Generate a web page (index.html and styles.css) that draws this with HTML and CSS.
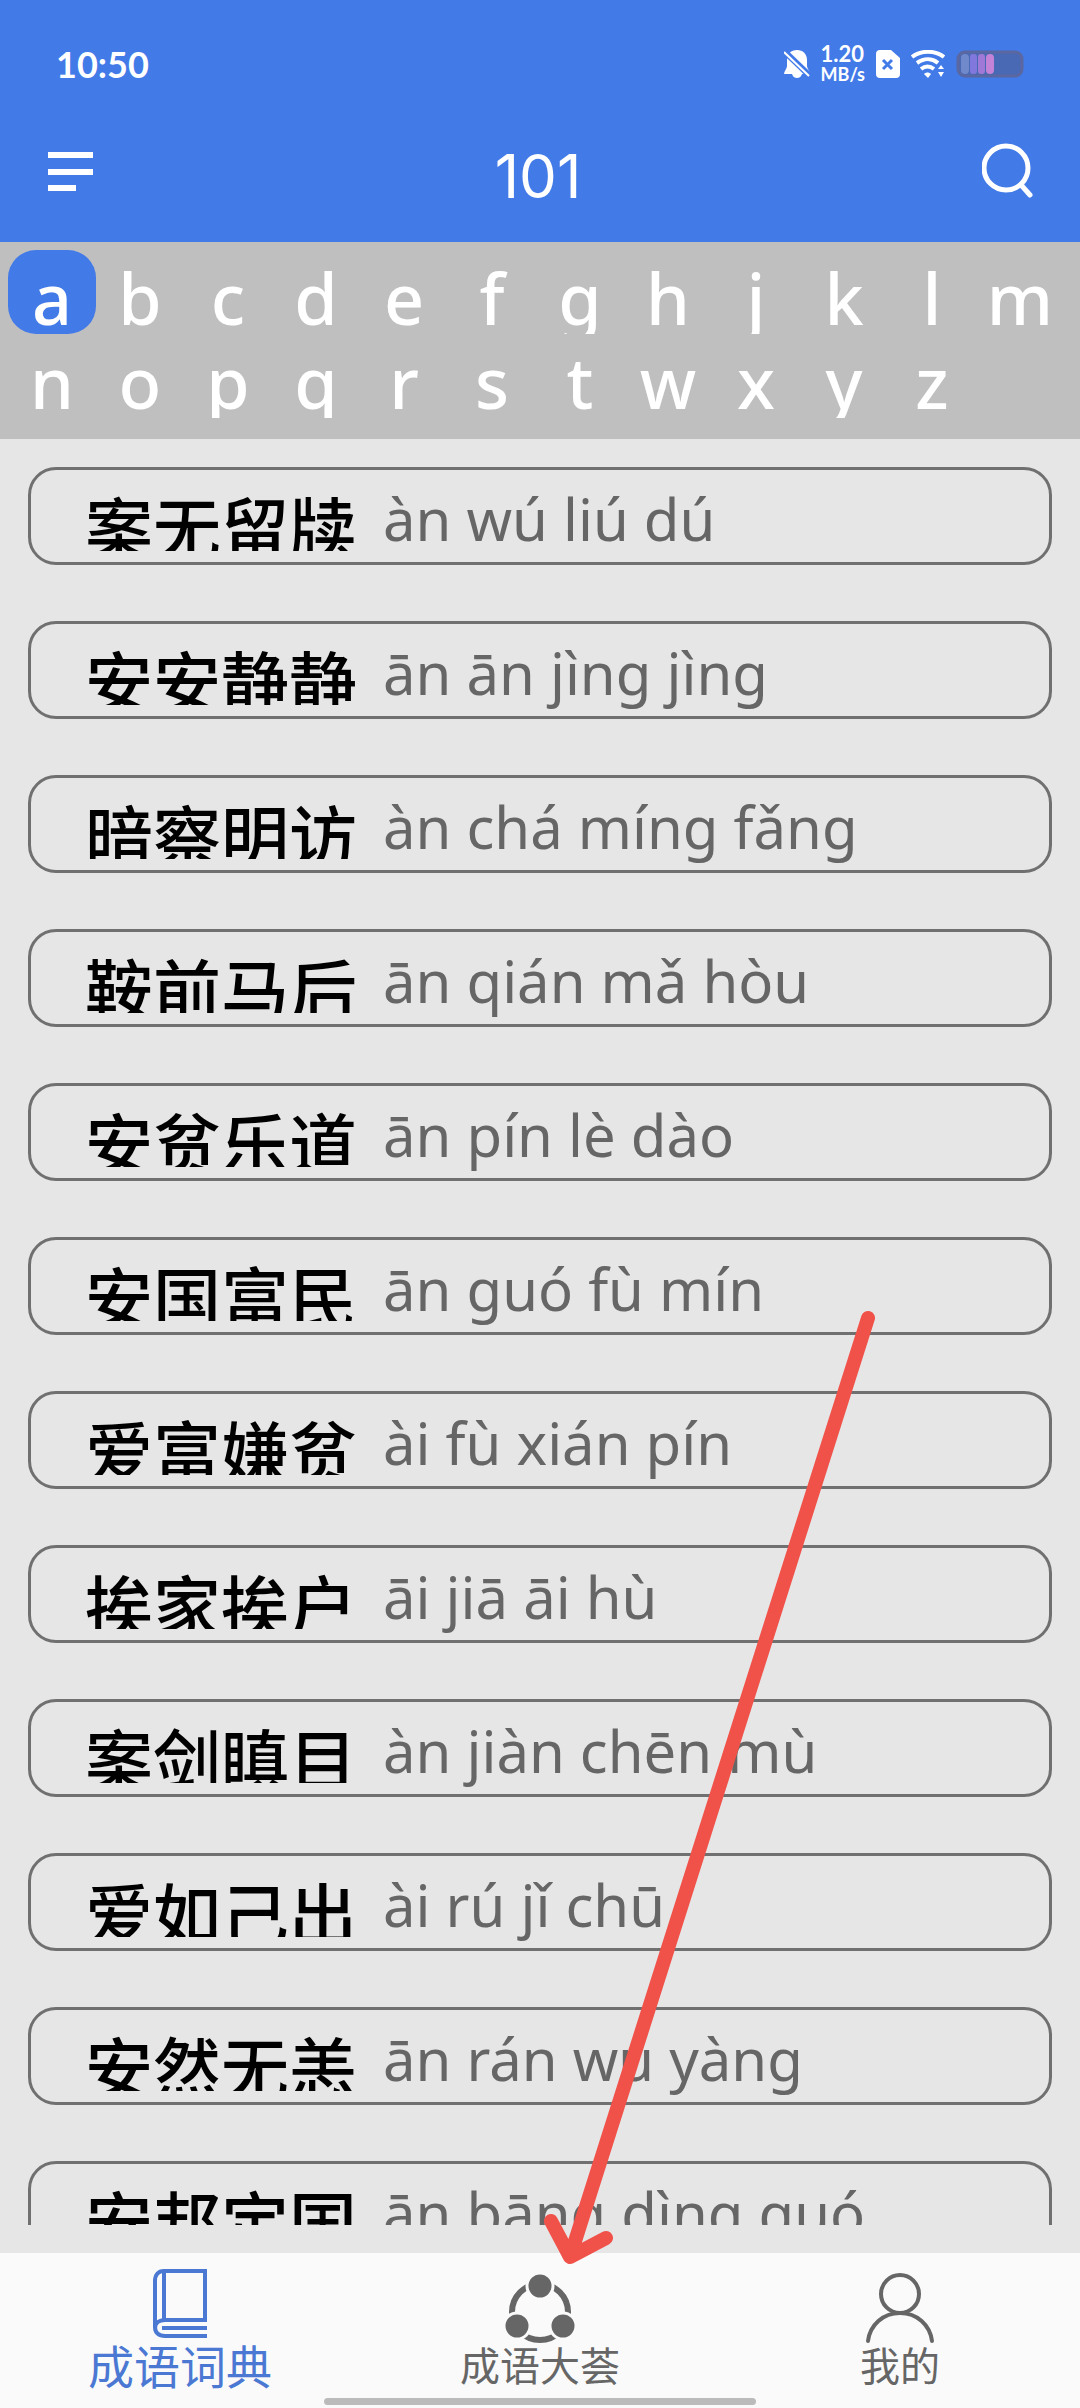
FILE: index.html
```html
<!DOCTYPE html>
<html lang="zh-CN">
<head>
    <meta charset="UTF-8">
    <meta name="viewport" content="width=device-width, initial-scale=1">
    <title>成语词典</title>
    <link rel="stylesheet" href="styles.css">
</head>
<body>
    <header class="header">
        <!-- Status bar -->
        <div class="status">
            <span class="time">10:50</span>
            <div class="status-icons">
                <svg class="bell" width="26" height="30" viewBox="0 0 26 30" fill="#fff">
                    <path d="M13 1c6 0 10 4 10 10v6c0 3 3 5 3 8H18c-1 3-3 4-5 4s-4-1-5-4H0c0-3 3-5 3-8v-6C3 5 7 1 13 1z"/>
                    <path d="M-1 1l27 26" stroke="#427ae8" stroke-width="6"/>
                    <path d="M0 3l25 24" stroke="#fff" stroke-width="2"/>
                </svg>
                <span class="speed">1.20<small>MB/s</small></span>
                <svg class="sim" width="24" height="28" viewBox="0 0 24 28">
                    <path d="M4 0h11l9 8v16a4 4 0 0 1-4 4H4a4 4 0 0 1-4-4V4a4 4 0 0 1 4-4z" fill="#fff"/>
                    <path d="M7 10l9 9M16 10l-9 9" stroke="#427ae8" stroke-width="3"/>
                </svg>
                <svg class="wifi" width="34" height="28" viewBox="0 0 34 28" fill="none" stroke="#fff" stroke-width="4">
                    <path d="M1 7c9-7 23-7 32 0M6 13c7-5 15-5 21 0M10 19c4-3 9-3 13 0"/>
                    <path d="M13 24c2-2 5-2 7 0l-3 4z" fill="#fff" stroke="none"/>
                    <path d="M27 19l3-4 3 4zM27 22h6l-3 5z" fill="#fff" stroke="none"/>
                </svg>
                <svg class="battery" width="68" height="28" viewBox="0 0 68 28">
                    <rect x="2" y="2" width="64" height="24" rx="7" fill="#4a69b5" stroke="#5a67a0" stroke-width="3"/>
                    <rect x="5" y="4" width="8" height="20" rx="4" fill="#7089cb"/>
                    <rect x="14" y="4" width="7" height="20" rx="3" fill="#8078dd"/>
                    <rect x="22" y="4" width="7" height="20" rx="3" fill="#a079d6"/>
                    <rect x="30" y="4" width="8" height="20" rx="4" fill="#c583d8"/>
                </svg>
            </div>
        </div>
        <!-- Title bar -->
        <div class="titlebar">
            <button type="button" class="icon-button" aria-label="菜单">
                <svg width="46" height="56" viewBox="0 0 46 56" fill="#fff">
                    <path d="M0 10h45v6H0zM0 27h45v6H0zM0 43h28v6H0z"/>
                </svg>
            </button>
            <h1>101</h1>
            <button type="button" class="icon-button" aria-label="搜索">
                <svg width="54" height="56" viewBox="0 0 54 56" fill="none" stroke="#fff" stroke-width="5" stroke-linecap="round">
                    <circle cx="24" cy="26" r="22"/>
                    <path d="M40 44l8 9"/>
                </svg>
            </button>
        </div>
    </header>

    <!-- Pinyin initials -->
    <div class="letters">
        <button type="button" class="letter active">a</button>
        <button type="button" class="letter">b</button>
        <button type="button" class="letter">c</button>
        <button type="button" class="letter">d</button>
        <button type="button" class="letter">e</button>
        <button type="button" class="letter">f</button>
        <button type="button" class="letter">g</button>
        <button type="button" class="letter">h</button>
        <button type="button" class="letter">j</button>
        <button type="button" class="letter">k</button>
        <button type="button" class="letter">l</button>
        <button type="button" class="letter">m</button>
        <button type="button" class="letter">n</button>
        <button type="button" class="letter">o</button>
        <button type="button" class="letter">p</button>
        <button type="button" class="letter">q</button>
        <button type="button" class="letter">r</button>
        <button type="button" class="letter">s</button>
        <button type="button" class="letter">t</button>
        <button type="button" class="letter">w</button>
        <button type="button" class="letter">x</button>
        <button type="button" class="letter">y</button>
        <button type="button" class="letter">z</button>
    </div>

    <main class="list">
        <a href="#" class="item"><span class="idiom">案无留牍</span><span class="pinyin">àn wú liú dú</span></a>
        <a href="#" class="item"><span class="idiom">安安静静</span><span class="pinyin">ān ān jìng jìng</span></a>
        <a href="#" class="item"><span class="idiom">暗察明访</span><span class="pinyin">àn chá míng fǎng</span></a>
        <a href="#" class="item"><span class="idiom">鞍前马后</span><span class="pinyin">ān qián mǎ hòu</span></a>
        <a href="#" class="item"><span class="idiom">安贫乐道</span><span class="pinyin">ān pín lè dào</span></a>
        <a href="#" class="item"><span class="idiom">安国富民</span><span class="pinyin">ān guó fù mín</span></a>
        <a href="#" class="item"><span class="idiom">爱富嫌贫</span><span class="pinyin">ài fù xián pín</span></a>
        <a href="#" class="item"><span class="idiom">挨家挨户</span><span class="pinyin">āi jiā āi hù</span></a>
        <a href="#" class="item"><span class="idiom">案剑瞋目</span><span class="pinyin">àn jiàn chēn mù</span></a>
        <a href="#" class="item"><span class="idiom">爱如己出</span><span class="pinyin">ài rú jǐ chū</span></a>
        <a href="#" class="item"><span class="idiom">安然无恙</span><span class="pinyin">ān rán wú yàng</span></a>
        <a href="#" class="item"><span class="idiom">安邦定国</span><span class="pinyin">ān bāng dìng guó</span></a>
    </main>

    <nav class="tabbar">
        <a href="#" class="tab active">
            <svg width="56" height="70" viewBox="0 0 56 70" fill="none" stroke="currentColor" stroke-width="4">
                <path d="M55 3H12C6 3 3 7 3 13v46c0 6 4 9 10 9h42"/>
                <path d="M53 3v49H13c-6 0-10 3-10 8"/>
                <path d="M12 3v49M10 60h45"/>
            </svg>
            <span>成语词典</span>
        </a>
        <a href="#" class="tab">
            <svg width="70" height="70" viewBox="0 0 70 70" fill="currentColor">
                <circle cx="35" cy="44" r="28" fill="none" stroke="currentColor" stroke-width="6"/>
                <g stroke="#fafafa" stroke-width="3">
                    <circle cx="35" cy="18" r="13"/>
                    <circle cx="12" cy="58" r="13"/>
                    <circle cx="58" cy="58" r="13"/>
                </g>
            </svg>
            <span>成语大荟</span>
        </a>
        <a href="#" class="tab">
            <svg width="70" height="70" viewBox="0 0 70 70" fill="none" stroke="currentColor" stroke-width="4" stroke-linecap="round">
                <circle cx="35" cy="26" r="19"/>
                <path d="M3 73c2-16 15-28 32-28s30 12 32 28"/>
            </svg>
            <span>我的</span>
        </a>
        <div class="home-line"></div>
    </nav>

    <!-- Guide arrow, points at the middle tab -->
    <svg class="guide" width="340" height="970" viewBox="0 0 340 970" fill="none" stroke="#f0524a" stroke-width="14" stroke-linecap="round" stroke-linejoin="round">
        <path d="M328 18L30 957M11 921l19 36 36-19"/>
    </svg>
</body>
</html>
```
FILE: styles.css
```css
* {
    box-sizing: border-box;
}
body {
    position: relative;
    display: flex;
    flex-direction: column;
    height: 100vh;
    margin: 0;
    overflow: hidden;
    background-color: #e6e6e6;
    color: #666;
    font-family: "Noto Sans", "Noto Sans CJK SC", sans-serif;
}
button {
    padding: 0;
    border: none;
    background: none;
    color: inherit;
    font-family: inherit;
    cursor: pointer;
}
a {
    color: inherit;
    text-decoration: none;
}

/* Header */
.header {
    flex: none;
    background-color: #427ae8;
    color: #fff;
}
.status {
    display: flex;
    align-items: center;
    justify-content: space-between;
    height: 128px;
    padding: 0 56px;
}
.time {
    font: bold 36px/40px Lato, sans-serif;
}
.status-icons {
    display: flex;
    align-items: center;
    gap: 11px;
}
.speed {
    display: flex;
    flex-direction: column;
    font: bold 22px/20px Lato, sans-serif;
}
.speed small {
    font-size: 18px;
}
.titlebar {
    display: flex;
    align-items: flex-start;
    justify-content: space-between;
    height: 114px;
    padding: 14px 44px 0 48px;
}
.titlebar h1 {
    margin: 0;
    font-family: Inter, sans-serif;
    font-size: 60px;
    font-weight: normal;
    line-height: 68px;
}
.icon-button svg {
    display: block;
}

/* Letter index */
.letters {
    flex: none;
    display: grid;
    grid-template-columns: repeat(12, 1fr);
    padding: 8px 16px 21px 8px;
    background-color: #bfbfbf;
}
.letter {
    height: 84px;
    overflow: hidden;
    border-radius: 28px;
    color: #fff;
    font-size: 70px;
    font-weight: 500;
    line-height: 96px;
}
.letter.active {
    background-color: #427ae8;
}

/* Idiom list */
.list {
    flex: 1;
    min-height: 0;
    margin-bottom: 28px;
    overflow-y: auto;
    scrollbar-width: none;
}
.item {
    display: flex;
    gap: 26px;
    margin: 28px 28px 56px;
    padding: 11px 20px 11px 54px;
    border: 3px solid #707070;
    border-radius: 28px;
}
.item + .item {
    margin-top: 0;
}
.idiom,
.pinyin {
    height: 70px;
    white-space: nowrap;
}
.idiom {
    overflow: hidden;
    color: #000;
    font-family: "Noto Sans CJK SC", sans-serif;
    font-size: 68px;
    font-weight: 500;
    line-height: 90px;
}
.pinyin {
    font-size: 58px;
    line-height: 76px;
}

/* Tab bar */
.tabbar {
    position: relative;
    flex: none;
    display: grid;
    grid-template-columns: repeat(3, 1fr);
    height: 155px;
    background-color: #fafafa;
}
.tab {
    display: flex;
    flex-direction: column;
    align-items: center;
    padding-top: 15px;
    font-family: "Noto Sans CJK SC", sans-serif;
    font-size: 40px;
    line-height: 52px;
}
.tab svg {
    overflow: visible;
}
.tab.active {
    color: #4a78d2;
    font-size: 46px;
}
.home-line {
    position: absolute;
    bottom: 3px;
    left: 30%;
    width: 40%;
    height: 7px;
    border-radius: 4px;
    background-color: #bbb;
}

.guide {
    position: absolute;
    bottom: 138px;
    left: 50%;
    pointer-events: none;
}
```
